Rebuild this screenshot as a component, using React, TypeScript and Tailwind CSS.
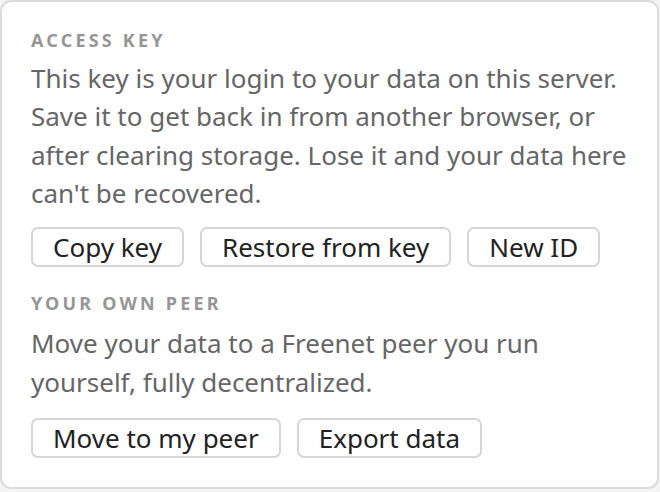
const sections = [
  {
    title: "ACCESS KEY",
    body: "This key is your login to your data on this server. Save it to get back in from another browser, or after clearing storage. Lose it and your data here can't be recovered.",
    actions: ["Copy key", "Restore from key", "New ID"],
  },
  {
    title: "YOUR OWN PEER",
    body: "Move your data to a Freenet peer you run yourself, fully decentralized.",
    actions: ["Move to my peer", "Export data"],
  },
];

function ActionButton({ label }: { label: string }) {
  return (
    <button className="h-[40px] px-[20px] rounded-[7px] border-2 border-[#d6d6d6] bg-white text-[26px] leading-none text-[#222]">
      {label}
    </button>
  );
}

export default function App() {
  return (
    <div
      className="w-[660px] h-[492px] bg-[#f4f4f4]"
      style={{ fontFamily: '"Noto Sans", "Open Sans", sans-serif' }}
    >
      <div className="w-[659px] h-[489px] bg-white border-2 border-[#dcdcdc] rounded-[11px] pl-[29px] pr-[16px] pt-[26px]">
        {sections.map((s, i) => (
          <section key={s.title} className={i > 0 ? "mt-[24.5px]" : ""}>
            <h3 className="text-[18px] leading-[24px] font-bold tracking-[3.2px] text-[#969696]">
              {s.title}
            </h3>
            <p className={`${i > 0 ? "mt-[9px]" : "mt-[7px]"} text-[26px] leading-[38.4px] text-[#666]`}>
              {s.body}
            </p>
            <div className={`${i > 0 ? "mt-[17px]" : "mt-[14px]"} flex gap-[16px]`}>
              {s.actions.map((a) => (
                <ActionButton key={a} label={a} />
              ))}
            </div>
          </section>
        ))}
      </div>
    </div>
  );
}
